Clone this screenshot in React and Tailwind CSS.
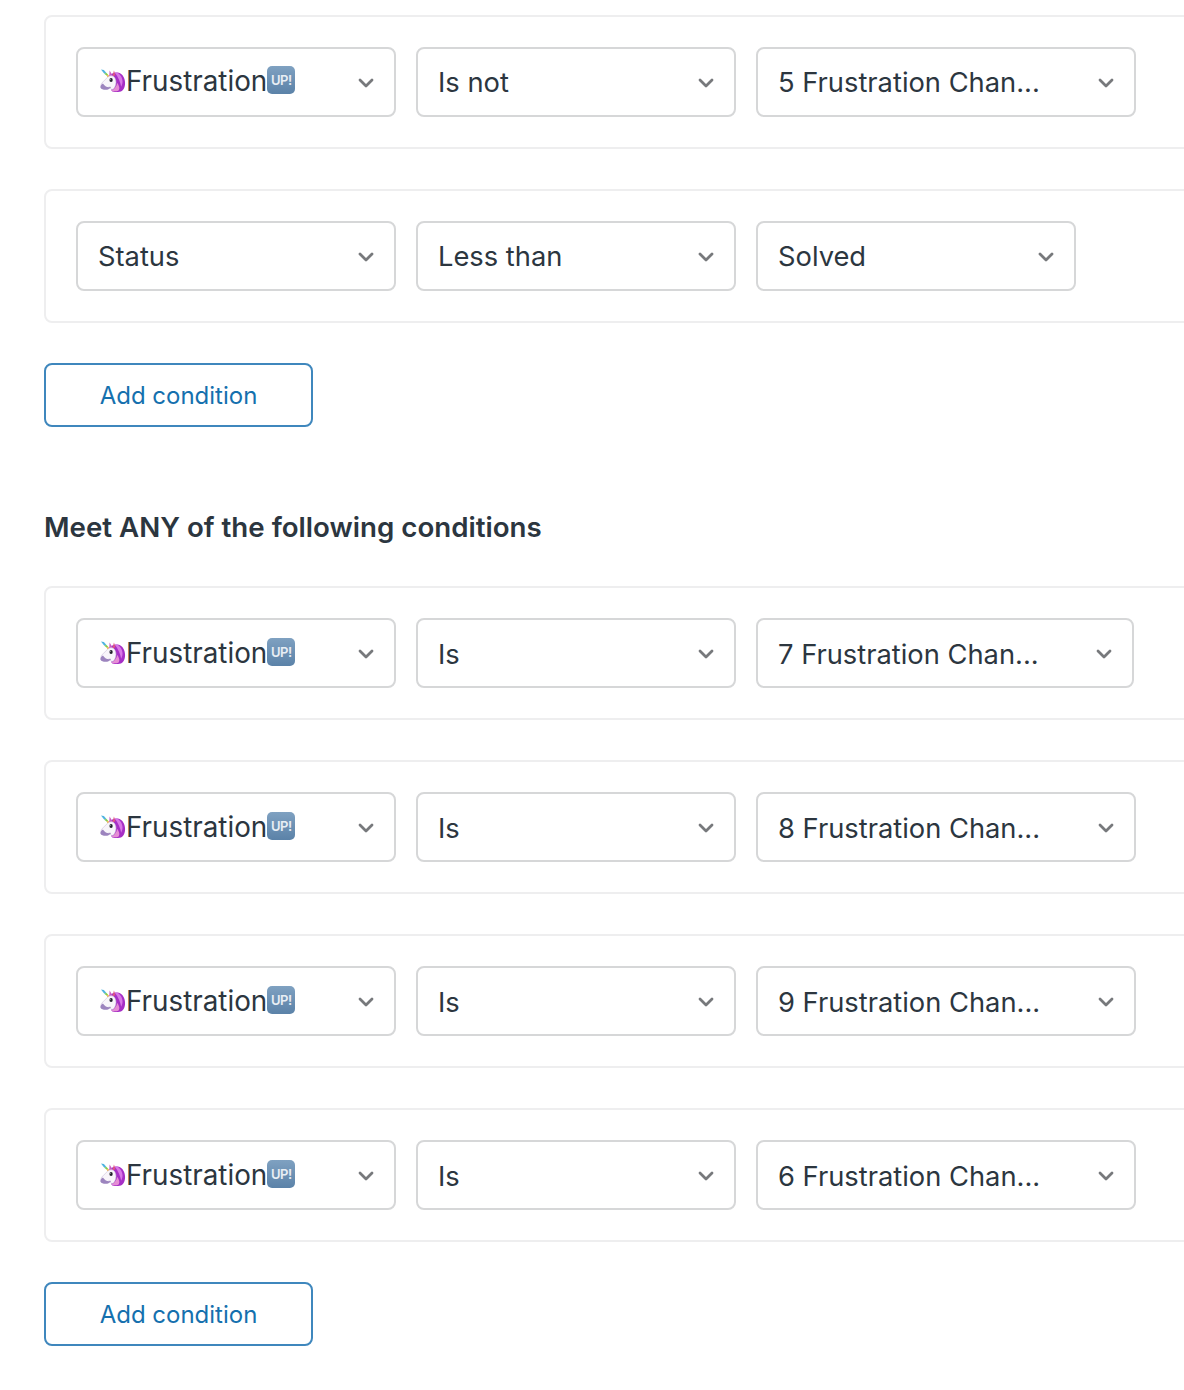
const Chevron = () => (
    <svg width="16" height="10" viewBox="0 0 16 10" fill="none" className="shrink-0 -translate-x-px translate-y-px">
        <path d="M2 2l6 6 6-6" stroke="#77797c" strokeWidth="2.800" strokeLinecap="round" strokeLinejoin="round" />
    </svg>
);

const Unicorn = () => (
    <svg width="26" height="26" viewBox="0 0 27 26" className="shrink-0 -mt-0.5">
        {/* mane */}
        <path d="M9 8c5-6 14-5 16 2 2 5 1 11-2 13-3 2-9 2-11 0z" fill="#a62fc6" />
        <path d="M15 4c4 0 7 3 8 7 1 3 0 6-1 8-1-5-3-10-7-15z" fill="#d878e6" />
        <path d="M18 15c2 3 3 6 1 8-2 1-5 1-7 0 3-2 5-4 6-8z" fill="#e58ed4" />
        {/* ears */}
        <path d="M10 2l3.500 6-4 1z" fill="#c85cc8" />
        <path d="M14.500 2l1.500 5-3 1z" fill="#e0567c" />
        {/* horn */}
        <path d="M1 1l3 .500 2.500 3-2 1z" fill="#4fb4e0" />
        <path d="M4.500 5.500l2-1 2 2-1.500 1z" fill="#84cc52" />
        <path d="M7 7.500l1.500-1 1.500 2-1.500 1.500z" fill="#f0a83a" />
        {/* head */}
        <path d="M8 9c2.500-2 6-2 7.500 1 1.500 3 1.500 6 0 9-1 2.500-3 3.500-4.500 2l-1-2c-2.500 1.500-7 1.500-8.500-.500-1-1.500 0-3.500 2-5z" fill="#f8f5fa" stroke="#c9bcd8" strokeWidth=".6" />
        <path d="M3 15.500c-2 1-3 3-2.500 4.500 1 2 4.500 2.500 7 2 2-.500 3.500-1.500 4-3-3 1-5.500.5-8.500-3.500z" fill="#9c84be" />
        <ellipse cx="11.500" cy="12" rx="1.700" ry="2" fill="#20202a" />
        <circle cx="11" cy="11.300" r=".5" fill="#ffffff" />
    </svg>
);

const UpBadge = () => (
    <span className="shrink-0 w-[28px] h-[28px] rounded-[5px] bg-gradient-to-b from-[#7fa1c1] to-[#5b82a8] flex items-center justify-center text-[#e8eef4] text-[13px] leading-none font-semibold tracking-[-0.5px] -mt-[3px]">
        UP!
    </span>
);

function Select({ children, width = 'w-[320px]', custom, low }) {
    return (
        <div className={`${width} h-[70px] shrink-0 bg-white border-2 border-[#d6d7d8] rounded-[8px] pl-5 pr-[19px] flex items-center justify-between`}>
            {custom ? (
                <div className={`flex items-center h-full pl-[2px] text-[27.8px] ${low ? 'pt-[1px]' : 'pb-[1px]'}`}>{children}</div>
            ) : (
                <span className={`whitespace-nowrap ${low ? 'pt-[3px]' : 'pt-px'}`}>{children}</span>
            )}
            <Chevron />
        </div>
    );
}

const Frustration = ({ low }) => (
    <Select custom low={low}>
        <Unicorn />
        <span className="pt-[1px]">Frustration</span>
        <UpBadge />
    </Select>
);

function ConditionRow({ first, op, value, valueWidth = 'w-[380px]', low }) {
    return (
        <div className="w-[1300px] h-[134px] border-2 border-[#eeeeef] rounded-[8px] px-[30px] flex items-center gap-5">
            {first ? <Select>{first}</Select> : <Frustration low={low} />}
            <Select low={low}>{op}</Select>
            <Select width={valueWidth} low={low}>{value}</Select>
        </div>
    );
}

function AddCondition() {
    return (
        <button className="w-[269px] h-[64px] border-2 border-[#3f87bd] rounded-[8px] bg-white text-[#1570ae] text-[24px] leading-none pt-px">
            Add condition
        </button>
    );
}

export default function App() {
    return (
        <div className="w-[1184px] h-[1390px] overflow-hidden bg-white text-[#2c363f] text-[27.3px] leading-none pl-[44px] pt-[15px] font-['Inter',sans-serif]">
            <div className="flex flex-col gap-10">
                <ConditionRow op="Is not" value="5 Frustration Chan..." />
                <ConditionRow first="Status" op="Less than" value="Solved" valueWidth="w-[320px]" />
                <div>
                    <AddCondition />
                </div>
            </div>

            <h2 className="mt-[85px] mb-[44px] text-[27.7px] font-semibold leading-[30px]">Meet ANY of the following conditions</h2>

            <div className="flex flex-col gap-10">
                <ConditionRow low op="Is" value="7 Frustration Chan..." valueWidth="w-[378px]" />
                <ConditionRow low op="Is" value="8 Frustration Chan..." />
                <ConditionRow low op="Is" value="9 Frustration Chan..." />
                <ConditionRow low op="Is" value="6 Frustration Chan..." />
                <div>
                    <AddCondition />
                </div>
            </div>
        </div>
    );
}
